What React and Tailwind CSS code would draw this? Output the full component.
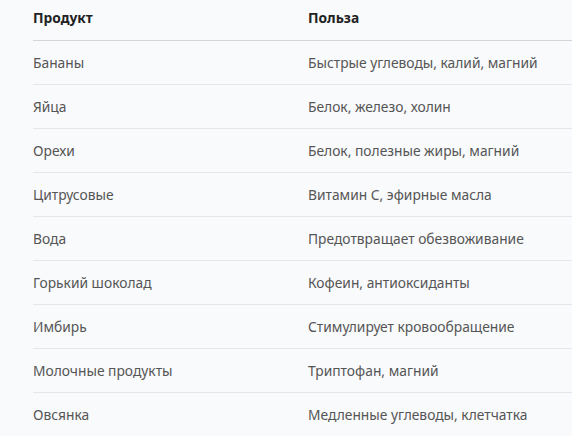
export default function App() {
  const rows = [
    ["Бананы", "Быстрые углеводы, калий, магний"],
    ["Яйца", "Белок, железо, холин"],
    ["Орехи", "Белок, полезные жиры, магний"],
    ["Цитрусовые", "Витамин C, эфирные масла"],
    ["Вода", "Предотвращает обезвоживание"],
    ["Горький шоколад", "Кофеин, антиоксиданты"],
    ["Имбирь", "Стимулирует кровообращение"],
    ["Молочные продукты", "Триптофан, магний"],
    ["Овсянка", "Медленные углеводы, клетчатка"],
  ];
  return (
    <div className="w-[572px] h-[436px] overflow-hidden bg-[#f9fafc] pl-[33px]" style={{ fontFamily: '"Noto Sans", sans-serif' }}>
      <div className="grid grid-cols-[275px_1fr] h-[41px] border-b border-[#d4d6da] items-center pb-[4px] text-[13.8px] font-bold text-[#222]">
        <div>Продукт</div>
        <div>Польза</div>
      </div>
      {rows.map(([a, b]) => (
        <div key={a} className="grid grid-cols-[275px_1fr] h-[44px] border-b border-[#e4e6ea] items-center pt-[2px] text-[13.8px] text-[#555]">
          <div>{a}</div>
          <div>{b}</div>
        </div>
      ))}
    </div>
  );
}
